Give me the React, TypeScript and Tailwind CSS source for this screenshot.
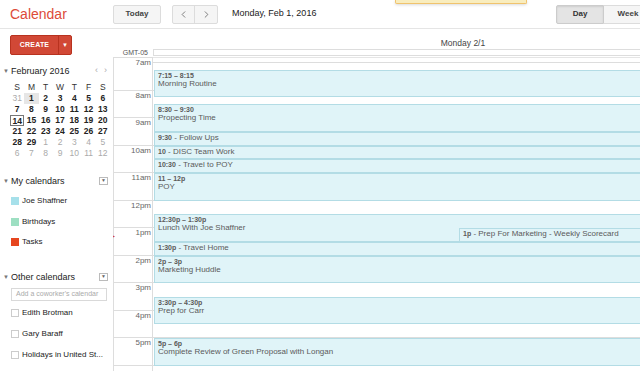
import { ChevronLeft, ChevronRight } from "lucide-react";

const HOUR = 27.5;
const OFFSET = 5;

type CalEvent = {
  start: number;
  end: number;
  time: string;
  title: string;
  single?: boolean;
  left?: number;
};

const EVENTS: CalEvent[] = [
  { start: 7.25, end: 8.25, time: "7:15 – 8:15", title: "Morning Routine" },
  { start: 8.5, end: 9.5, time: "8:30 – 9:30", title: "Propecting Time" },
  { start: 9.5, end: 10, time: "9:30", title: "Follow Ups", single: true },
  { start: 10, end: 10.5, time: "10", title: "DISC Team Work", single: true },
  { start: 10.5, end: 11, time: "10:30", title: "Travel to POY", single: true },
  { start: 11, end: 12, time: "11 – 12p", title: "POY" },
  { start: 12.5, end: 13.5, time: "12:30p – 1:30p", title: "Lunch With Joe Shaffner" },
  { start: 13.5, end: 14, time: "1:30p", title: "Travel Home", single: true },
  { start: 14, end: 15, time: "2p – 3p", title: "Marketing Huddle" },
  { start: 15.5, end: 16.5, time: "3:30p – 4:30p", title: "Prep for Carr" },
  { start: 17, end: 18, time: "5p – 6p", title: "Complete Review of Green Proposal with Longan" },
  {
    start: 13,
    end: 13.5,
    time: "1p",
    title: "Prep For Marketing - Weekly Scorecard",
    single: true,
    left: 305,
  },
];

const HOURS = ["8am", "9am", "10am", "11am", "12pm", "1pm", "2pm", "3pm", "4pm", "5pm", ""];

const WEEKS: [number, boolean][][] = [
  [[31, false], [1, true], [2, true], [3, true], [4, true], [5, true], [6, true]],
  [[7, true], [8, true], [9, true], [10, true], [11, true], [12, true], [13, true]],
  [[14, true], [15, true], [16, true], [17, true], [18, true], [19, true], [20, true]],
  [[21, true], [22, true], [23, true], [24, true], [25, true], [26, true], [27, true]],
  [[28, true], [29, true], [1, false], [2, false], [3, false], [4, false], [5, false]],
  [[6, false], [7, false], [8, false], [9, false], [10, false], [11, false], [12, false]],
];

function SectionTitle({ label }: { label: string }) {
  return (
    <div className="flex h-[12px] items-center">
      <span className="w-[11px] pl-[3px] text-[6px] text-[#777]">▼</span>
      <span className="text-[9px] leading-[12px] text-[#222]">{label}</span>
      <span className="ml-auto mr-[5px] flex h-[8px] w-[9px] items-center justify-center border border-[#bbb] text-[5px] text-[#666]">
        ▼
      </span>
    </div>
  );
}

function MiniCalendar() {
  return (
    <div className="mt-[10px]">
      <div className="flex h-[12px] items-center">
        <span className="w-[11px] pl-[3px] text-[6px] text-[#777]">▼</span>
        <span className="text-[9px] leading-[12px] text-[#222]">February 2016</span>
        <span className="ml-auto mr-[6px] flex gap-[6px] text-[9px] text-[#aaa]">
          <span>‹</span>
          <span>›</span>
        </span>
      </div>
      <div className="ml-[10px] mt-[5px] grid w-[100px] grid-cols-7 text-center">
        {["S", "M", "T", "W", "T", "F", "S"].map((d, i) => (
          <div key={i} className="h-[11px] text-[8.5px] leading-[11px] text-[#333]">
            {d}
          </div>
        ))}
        {WEEKS.flat().map(([n, cur], i) => {
          const selected = i === 1;
          const today = i === 14;
          return (
            <div
              key={i}
              className={`h-[11px] text-[8.5px] leading-[11px] ${
                cur ? "font-bold text-[#222]" : "text-[#aaa]"
              } ${selected ? "bg-[#e6e6e6]" : ""} ${
                today ? "border border-[#777] leading-[9px]" : ""
              }`}
            >
              {n}
            </div>
          );
        })}
      </div>
    </div>
  );
}

function Sidebar() {
  return (
    <aside className="w-[113px] shrink-0">
      <div className="ml-[10px] mt-[6px] flex h-[20px] w-[62px] rounded-[2px] border border-[#b8321f] bg-[#d14836] text-white">
        <div className="flex w-[47px] items-center justify-center text-[7px] font-bold tracking-[0.2px]">
          CREATE
        </div>
        <div className="flex flex-1 items-center justify-center border-l border-[#b8321f] text-[6px]">
          ▼
        </div>
      </div>

      <MiniCalendar />

      <div className="mt-[16px]">
        <SectionTitle label="My calendars" />
        <div className="mt-[4px]">
          {[
            ["Joe Shaffner", "bg-[#a6e0ea]"],
            ["Birthdays", "bg-[#9ddfc2]"],
            ["Tasks", "bg-[#e6461f]"],
          ].map(([name, color]) => (
            <div key={name} className="flex h-[20.5px] items-center pl-[11px]">
              <span className={`h-[8px] w-[8px] ${color}`} />
              <span className="ml-[3px] text-[8px] text-[#222]">{name}</span>
            </div>
          ))}
        </div>
      </div>

      <div className="mt-[18.5px]">
        <SectionTitle label="Other calendars" />
        <div className="ml-[11px] mt-[5px] flex h-[13px] w-[96px] items-center border border-[#d9d9d9] pl-[4px] text-[7px] text-[#aaa]">
          Add a coworker&apos;s calendar
        </div>
        <div className="mt-[1px]">
          {["Edith Brotman", "Gary Baraff", "Holidays in United St...", ""].map((name, i) => (
            <div key={i} className="flex h-[21px] items-center pl-[11px]">
              <span className="h-[8px] w-[8px] border border-[#ccc] bg-white" />
              <span className="ml-[3px] text-[8px] text-[#222]">{name}</span>
            </div>
          ))}
        </div>
      </div>
    </aside>
  );
}

function EventBox({ ev }: { ev: CalEvent }) {
  const top = OFFSET + (ev.start - 7) * HOUR;
  const height = (ev.end - ev.start) * HOUR;
  return (
    <div
      className="absolute right-0 border border-[#b3dce5] bg-[#e0f4f8] px-[3px] text-[#5a5a5a]"
      style={{ top, height, left: (ev.left ?? 0) + 1 }}
    >
      {ev.single ? (
        <div className="truncate text-[8px] leading-[10px]">
          <span className="text-[7px] font-bold">{ev.time}</span> - {ev.title}
        </div>
      ) : (
        <>
          <div className="pt-[1px] text-[7px] font-bold leading-[7px]">{ev.time}</div>
          <div className="truncate text-[8px] leading-[10px]">{ev.title}</div>
        </>
      )}
    </div>
  );
}

function DayGrid() {
  return (
    <div className="flex flex-1 overflow-hidden">
      <div className="relative w-[40px] shrink-0 border-l border-t border-r border-[#ddd]">
        <div className="h-[32.5px] border-b border-[#ddd] pr-[1px] pt-[1px] text-right text-[8px] leading-[8px] text-[#666]">
          7am
        </div>
        {HOURS.map((h, i) => (
          <div
            key={i}
            className="h-[27.5px] border-b border-[#ddd] pr-[1px] text-right text-[8px] leading-[10px] text-[#666]"
          >
            {h}
          </div>
        ))}
        <span
          className="absolute left-[-2px] text-[6px] leading-[6px] text-[#d14836]"
          style={{ top: OFFSET + 6.3 * HOUR - 3 }}
        >
          ▸
        </span>
      </div>
      <div className="relative w-[620px] shrink-0 border-t border-[#e5e5e5]">
        <div className="h-[5px] border-b border-[#ddd]" />
        {Array.from({ length: 12 }).map((_, i) => (
          <div key={i} className="h-[27.5px] border-b border-[#ddd]" />
        ))}
        {EVENTS.map((ev) => (
          <EventBox key={ev.title} ev={ev} />
        ))}
      </div>
    </div>
  );
}

export default function App() {
  return (
    <div className="relative flex h-[371px] w-[640px] flex-col overflow-hidden bg-white font-['Liberation_Sans',Arial,sans-serif]">
      <header className="flex h-[29px] w-[652px] shrink-0 items-center border-b border-[#e5e5e5]">
        <div className="w-[113px] pl-[10px] text-[14px] leading-[16px] text-[#dd4b39]">Calendar</div>
        <button className="h-[19px] w-[48px] rounded-[2px] border border-[#dcdcdc] bg-[#f5f5f5] text-[8px] font-bold text-[#444]">
          Today
        </button>
        <div className="ml-[11px] flex h-[19px] rounded-[2px] border border-[#dcdcdc] bg-[#f5f5f5]">
          <span className="flex w-[22px] items-center justify-center border-r border-[#dcdcdc] text-[#555]">
            <ChevronLeft size={11} strokeWidth={1.6} />
          </span>
          <span className="flex w-[22px] items-center justify-center text-[#555]">
            <ChevronRight size={11} strokeWidth={1.6} />
          </span>
        </div>
        <div className="ml-[14px] text-[9px] text-[#222]">Monday, Feb 1, 2016</div>
        <div className="ml-auto flex h-[19px] shrink-0">
          <span className="flex w-[48px] items-center justify-center rounded-l-[2px] border border-[#ccc] bg-[#e4e4e4] text-[8px] font-bold text-[#333] shadow-[inset_0_1px_2px_rgba(0,0,0,0.1)]">
            Day
          </span>
          <span className="flex w-[48px] items-center justify-center border-y border-[#dcdcdc] bg-[#f5f5f5] text-[8px] font-bold text-[#444]">
            Week
          </span>
        </div>
      </header>

      <div className="pointer-events-none absolute left-[395px] top-0 h-[4px] w-[132px] rounded-b-[2px] border border-t-0 border-[#f0c36d] bg-[#f9edbe] shadow-[0_1px_3px_rgba(0,0,0,0.15)]" />

      <div className="flex min-h-0 flex-1">
        <Sidebar />
        <main className="flex w-[660px] shrink-0 flex-col">
          <div className="h-[28px] shrink-0">
            <div className="ml-[40px] w-[620px] pt-[9px] text-center text-[8.5px] leading-[10px] text-[#444]">
              Monday 2/1
            </div>
            <div className="mt-[1px] flex items-center">
              <div className="w-[40px] pr-[5px] text-right text-[7px] leading-[7px] text-[#555]">GMT-05</div>
              <div className="h-[7px] w-[620px] border border-[#ddd] bg-white" />
            </div>
          </div>
          <DayGrid />
        </main>
      </div>
    </div>
  );
}
